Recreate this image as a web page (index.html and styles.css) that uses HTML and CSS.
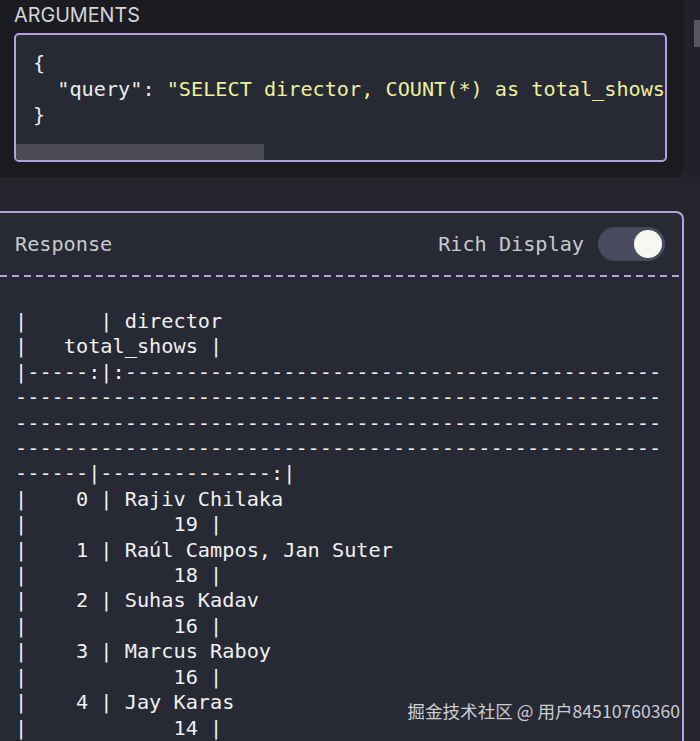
FILE: index.html
```html
<!DOCTYPE html>
<html>
<head>
<meta charset="utf-8">
<link rel="stylesheet" href="styles.css">
</head>
<body>
<div class="page">
  <div class="top-row">
    <section class="args-panel">
      <div class="args-label">ARGUMENTS</div>
      <div class="code-box">
        <pre class="code"><span class="p">{</span>
  <span class="k">"query"</span><span class="p">: </span><span class="s">"SELECT director, COUNT(*) as total_shows FROM netflix GROUP BY director"</span>
<span class="p">}</span></pre>
        <div class="hscroll"><div class="hthumb"></div></div>
      </div>
    </section>
    <div class="side-strip"><div class="vthumb"></div></div>
  </div>

  <section class="response">
    <header class="resp-head">
      <span class="resp-title">Response</span>
      <div class="rich">
        <span class="rich-label">Rich Display</span>
        <span class="toggle"><span class="knob"></span></span>
      </div>
    </header>
    <div class="dash"></div>
    <pre class="output">|      | director
|   total_shows |
|-----:|:--------------------------------------------
-----------------------------------------------------
-----------------------------------------------------
-----------------------------------------------------
------|--------------:|
|    0 | Rajiv Chilaka
|            19 |
|    1 | Raúl Campos, Jan Suter
|            18 |
|    2 | Suhas Kadav
|            16 |
|    3 | Marcus Raboy
|            16 |
|    4 | Jay Karas
|            14 |
|    5 | Cathy Garcia-Molina
|            13 |</pre>
  </section>

  <div class="watermark">掘金技术社区 @ 用户84510760360</div>
</div>
</body>
</html>
```

FILE: styles.css
```css
html, body {
  margin: 0;
  padding: 0;
}
body {
  background: #23242c;
  width: 700px;
  height: 741px;
  overflow: hidden;
}
.page {
  position: relative;
  width: 700px;
  height: 741px;
  overflow: hidden;
}
.top-row {
  display: flex;
  height: 177px;
}
.args-panel {
  width: 684px;
  height: 177px;
  background: #1b1c21;
  border-bottom-right-radius: 8px;
  box-sizing: border-box;
  padding: 3px 0 0 14px;
}
.args-label {
  font-family: "Inter", "Liberation Sans", sans-serif;
  font-size: 19.8px;
  line-height: 24px;
  color: #d6d6da;
  height: 30px;
}
.code-box {
  width: 653px;
  height: 129px;
  box-sizing: border-box;
  border: 2px solid #b59fdd;
  border-radius: 5px;
  background: #272935;
  overflow: hidden;
  display: flex;
  flex-direction: column;
  justify-content: space-between;
}
.code {
  margin: 0;
  padding: 15px 0 0 17px;
  font-family: "DejaVu Sans Mono", monospace;
  font-size: 20.2px;
  line-height: 26px;
  color: #ececec;
  white-space: pre;
  overflow: hidden;
}
.code .s { color: #eef09c; }
.code .k { color: #ececec; }
.hscroll {
  height: 16px;
}
.hthumb {
  width: 248px;
  height: 16px;
  background: #4a4b54;
}
.side-strip {
  flex: 1;
  background: #212229;
  position: relative;
}
.vthumb {
  position: absolute;
  right: 0;
  top: 20px;
  width: 6px;
  height: 27px;
  background: #56575e;
}
.response {
  margin-top: 34px;
  width: 684px;
  box-sizing: border-box;
  background: #272935;
  border-top: 2px solid #b59fdd;
  border-right: 2px solid #b59fdd;
  border-top-right-radius: 8px;
  height: 600px;
}
.resp-head {
  height: 62px;
  display: flex;
  align-items: center;
  justify-content: space-between;
  padding: 0 17px 0 15px;
  font-family: "DejaVu Sans Mono", monospace;
  font-size: 20.2px;
  color: #c9c9cf;
}
.rich {
  display: flex;
  align-items: center;
  gap: 14px;
}
.toggle {
  width: 67px;
  height: 34px;
  border-radius: 17px;
  background: #4a4a5e;
  display: flex;
  align-items: center;
  justify-content: flex-end;
  padding-right: 3px;
  box-sizing: border-box;
}
.knob {
  width: 28px;
  height: 28px;
  border-radius: 50%;
  background: #f8f8f2;
}
.dash {
  height: 2px;
  background: repeating-linear-gradient(to right, #b59fdd 0 7px, transparent 7px 12px);
}
.output {
  margin: 0;
  padding: 32px 0 0 15px;
  font-family: "DejaVu Sans Mono", monospace;
  font-size: 20.25px;
  line-height: 25.4px;
  color: #f0f0f0;
  white-space: pre;
}
.watermark {
  position: absolute;
  right: 20px;
  top: 699px;
  font-family: "Noto Sans CJK SC", "Noto Sans", sans-serif;
  font-size: 17.6px;
  line-height: 24px;
  color: rgba(235, 235, 240, 0.85);
}
```
